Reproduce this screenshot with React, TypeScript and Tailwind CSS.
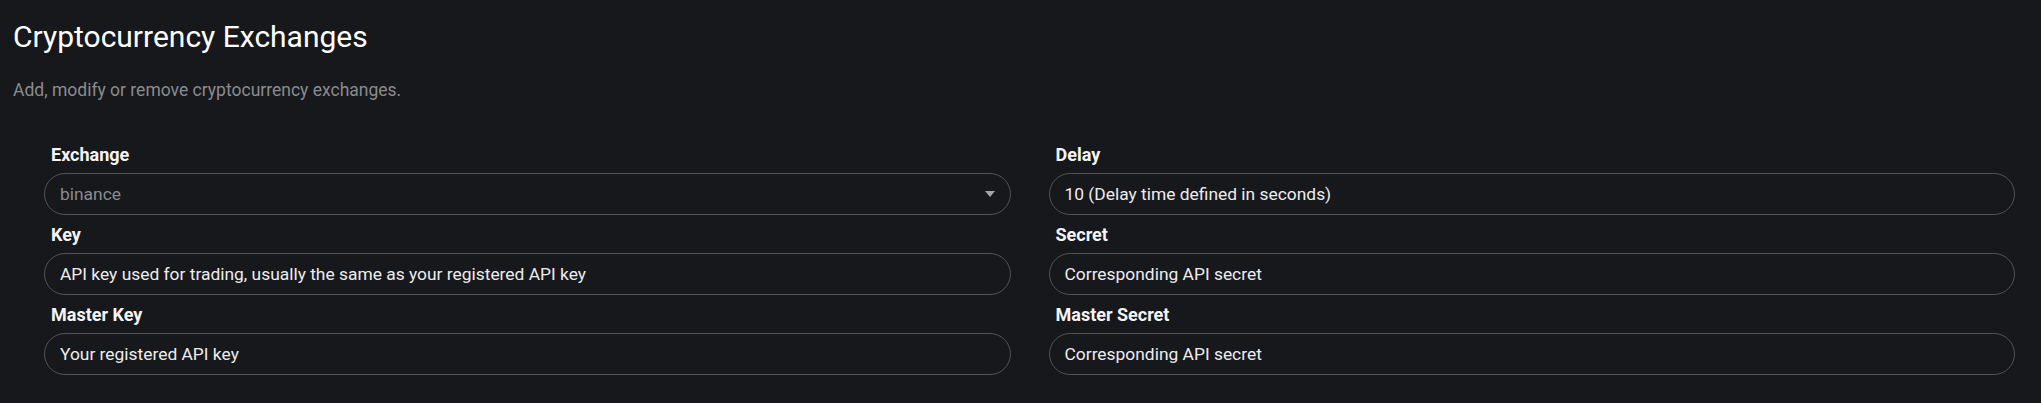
import React from "react";

type Field = {
  label: string;
  value: string;
  select?: boolean;
};

const FIELDS: Field[] = [
  { label: "Exchange", value: "binance", select: true },
  { label: "Delay", value: "10 (Delay time defined in seconds)" },
  { label: "Key", value: "API key used for trading, usually the same as your registered API key" },
  { label: "Secret", value: "Corresponding API secret" },
  { label: "Master Key", value: "Your registered API key" },
  { label: "Master Secret", value: "Corresponding API secret" },
];

function FormField({ f }: { f: Field }) {
  return (
    <div className="flex flex-col">
      <label className="pl-[7px] text-[18px] leading-[24px] font-bold text-[#f4f4f5] mb-[6px]">{f.label}</label>
      {f.select ? (
        <div className="relative h-[42px] rounded-full border border-[#525358] flex items-center pl-[15px] pr-[40px]">
          <span className="text-[17.4px] text-[#8a8b8e]">{f.value}</span>
          <svg className="absolute right-[15px] top-1/2 -translate-y-1/2" width="10" height="6" viewBox="0 0 10 6">
            <path d="M0 0 L10 0 L5 6 Z" fill="#a3a4a7" />
          </svg>
        </div>
      ) : (
        <input
          readOnly
          value={f.value}
          className="h-[42px] rounded-full border border-[#525358] bg-transparent pl-[15px] pr-[15px] text-[17.4px] text-[#ededee] outline-none"
        />
      )}
    </div>
  );
}

export default function App() {
  return (
    <div className="min-h-screen bg-[#17181c] font-['Roboto',sans-serif]">
      <div className="pl-[13px] pt-[19px]">
        <h1 className="text-[30px] leading-[36px] font-normal text-white">Cryptocurrency Exchanges</h1>
        <p className="mt-[23px] text-[17.5px] leading-[24px] text-[#8a8b8e]">Add, modify or remove cryptocurrency exchanges.</p>
      </div>
      <div className="mt-[41px] pl-[44px] pr-[26px] grid grid-cols-2 gap-x-[38px] gap-y-[8px]">
        {FIELDS.map((f) => (
          <FormField key={f.label} f={f} />
        ))}
      </div>
    </div>
  );
}
